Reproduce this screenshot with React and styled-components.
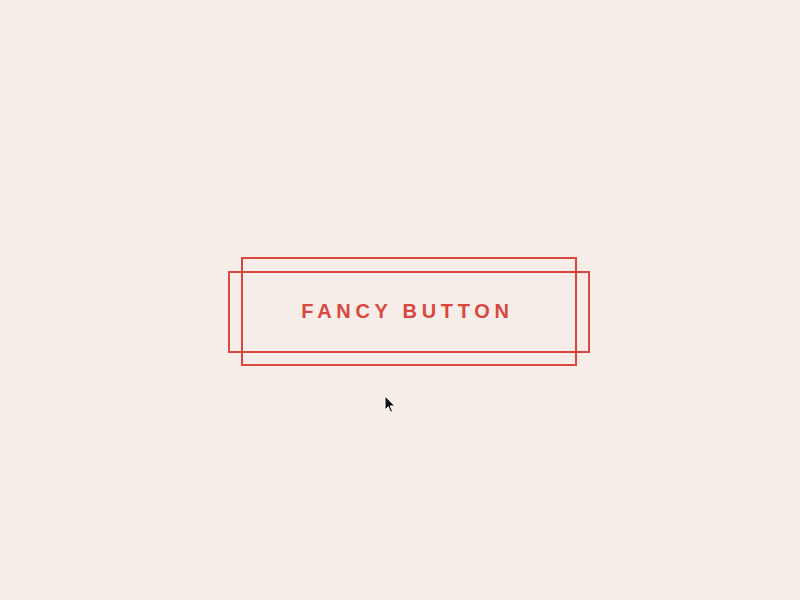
import React from 'react';
import styled, { createGlobalStyle } from 'styled-components';

const GlobalStyle = createGlobalStyle`
  html, body {
    margin: 0;
    padding: 0;
    background-color: #f7ede8;
  }
`;

const Stage = styled.main`
  position: relative;
  box-sizing: border-box;
  min-height: 100vh;
  padding: 23px 0 0 18px;
  display: flex;
  justify-content: center;
  align-items: center;
  background-color: #f7ede8;
`;

const FancyButton = styled.button`
  position: relative;
  box-sizing: border-box;
  width: 336px;
  height: 109px;
  padding: 0 3px 0 0;
  background: transparent;
  border: 2px solid #d8483f;
  color: #d8483f;
  font-family: "Liberation Sans", Arial, sans-serif;
  font-weight: 700;
  font-size: 20px;
  letter-spacing: 4.7px;
  text-transform: uppercase;
  cursor: pointer;

  &::before {
    content: '';
    position: absolute;
    box-sizing: border-box;
    top: 12px;
    bottom: 11px;
    left: -15px;
    right: -15px;
    border: 2px solid #d8483f;
    pointer-events: none;
  }
`;

const Pointer = styled.svg`
  position: absolute;
  left: 384px;
  top: 395px;
  width: 12px;
  height: 19px;
  pointer-events: none;
`;

const App = () => (
  <>
    <GlobalStyle />
    <Stage>
      <FancyButton>Fancy Button</FancyButton>
      <Pointer viewBox="0 0 12 19">
        <path
          d="M1 1 L1 15 L4.3 11.8 L6.6 17.3 L8.6 16.4 L6.3 11 L10.8 11 Z"
          fill="#111"
          stroke="#fff"
          strokeWidth="1"
          strokeLinejoin="round"
        />
      </Pointer>
    </Stage>
  </>
);

export default App;
